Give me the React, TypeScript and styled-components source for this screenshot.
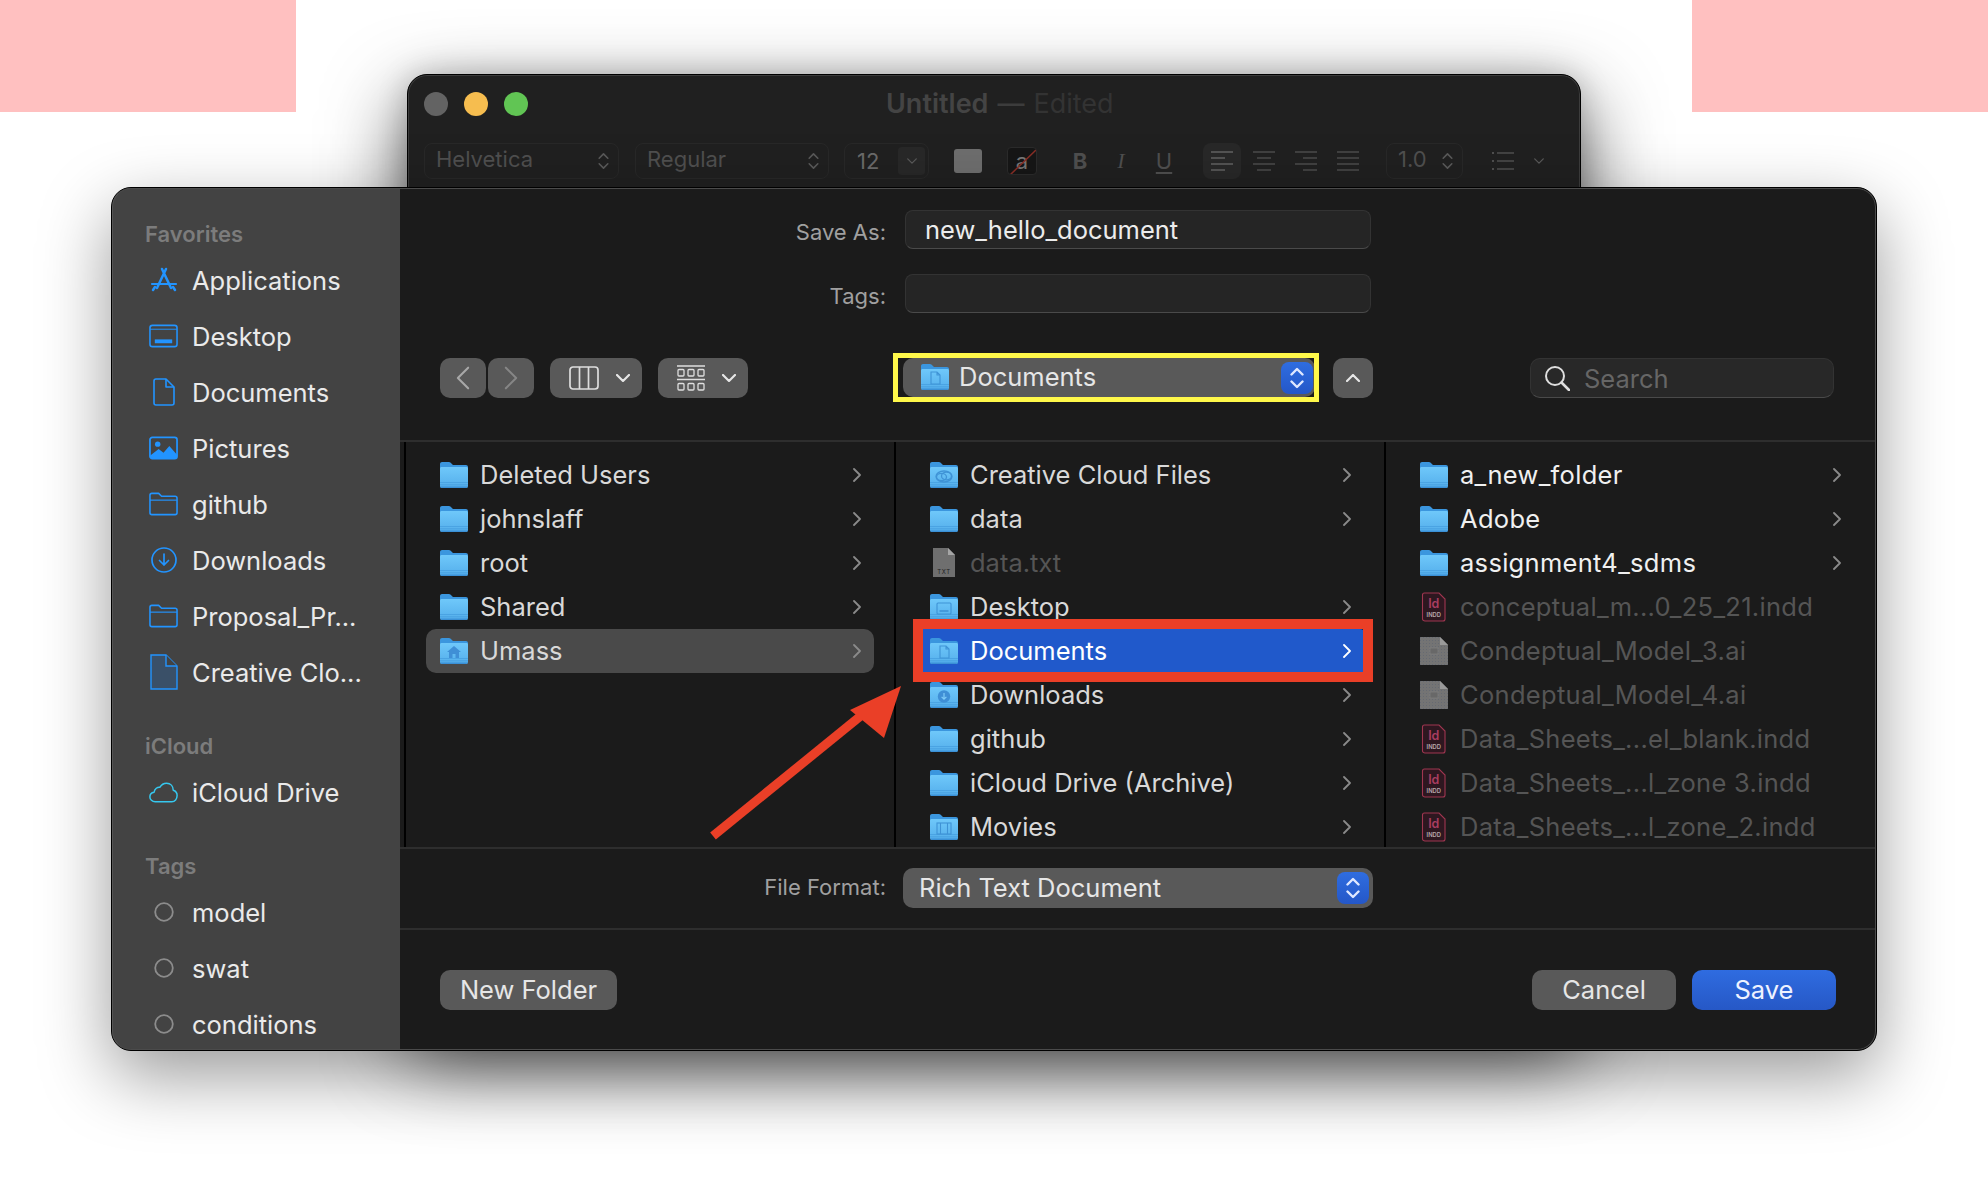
import React from 'react';
import styled, { createGlobalStyle } from 'styled-components';

const Global = createGlobalStyle`
  html, body { margin: 0; padding: 0; background: #fff; }
  * { box-sizing: border-box; }
`;
const FONT = `Inter, "Noto Sans", "Liberation Sans", sans-serif`;

const Page = styled.div`
  position: relative; width: 1988px; height: 1198px; overflow: hidden; background: #fff; font-family: ${FONT};
`;
const PinkRow = styled.div`display: flex; justify-content: space-between;`;
const Pink = styled.div`width: 296px; height: 112px; background: #ffc0c0;`;

/* background window */
const BackWindow = styled.div`
  position: absolute; left: 407px; top: 74px; width: 1174px; height: 950px;
  background: #202020; border: 1px solid #000; border-radius: 20px;
  box-shadow: inset 0 0 0 1px #3c3c3c, 0 30px 80px rgba(0,0,0,.72), 0 0 30px rgba(0,0,0,.18);
`;
const TitleBar = styled.div`display: flex; align-items: center; gap: 16px; height: 58px; padding-left: 16px;`;
const Light = styled.span<{ $c: string }>`width: 24px; height: 24px; border-radius: 50%; background: ${p => p.$c};`;
const Title = styled.div`margin-left: 342px; font-size: 27px; line-height: 32px; color: #333; white-space: nowrap;`;
const TitleStrong = styled.span`font-weight: 600; color: #444;`;
const TitleDash = styled.span`color: #3c3c3c; font-weight: 500; margin: 0 9px;`;
const BackBar = styled.div`display: flex; align-items: center; height: 36px; margin-top: 10px; padding-left: 16px; color: #4f4f4f;`;
const BPill = styled.div<{ $w: number; $ml?: number }>`
  display: flex; align-items: center; justify-content: space-between; flex: none; width: ${p => p.$w}px; height: 36px;
  margin-left: ${p => p.$ml ?? 0}px; padding: 0 9px 5px 11px; border: 1px solid #282828; border-radius: 8px;
  font-size: 22px; color: #4f4f4f;
  & > svg { margin-top: 5px; }
`;
const SizePill = styled(BPill)`padding: 0 3px 0 12px; color: #6a6a6a;`;
const ChevBox = styled.span`display: flex; align-items: center; justify-content: center; width: 27px; height: 28px; border-radius: 4px; background: #282828;`;
const Swatch = styled.div`flex: none; width: 28px; height: 24px; margin-left: 25px; border-radius: 3px; background: #6e6e6e;`;
const NoColor = styled.div`
  position: relative; display: flex; align-items: center; justify-content: center; flex: none; width: 30px; height: 28px; margin-left: 25px;
  border-radius: 4px; background: #161616; border: 1px solid #2b2b2b; color: #777; font-size: 22px; overflow: hidden;
`;
const Slash = styled.svg`position: absolute; inset: 0;`;
const StyleBtn = styled.span<{ $ml: number }>`
  display: inline-block; flex: none; margin-left: ${p => p.$ml}px; width: 20px; text-align: center; font-size: 22px; color: #4f4f4f;
`;
const Bold = styled(StyleBtn)`font-weight: 700;`;
const Ital = styled(StyleBtn)`font-style: italic; font-family: "Liberation Serif", serif; font-weight: 400;`;
const Under = styled(StyleBtn)`text-decoration: underline; text-underline-offset: 3px;`;
const AlignBox = styled.div<{ $on?: boolean; $ml: number }>`
  display: flex; align-items: center; justify-content: center; flex: none; width: 38px; height: 36px; margin-left: ${p => p.$ml}px;
  border-radius: 8px; background: ${p => (p.$on ? '#282828' : 'transparent')};
`;
const ListSlot = styled.span<{ $ml: number }>`display: flex; flex: none; margin-left: ${p => p.$ml}px;`;

/* sheet */
const Sheet = styled.div`
  position: absolute; left: 111px; top: 187px; width: 1766px; height: 864px; display: flex; overflow: hidden;
  border-radius: 20px; border: 1px solid #000; background: #1b1b1b; box-shadow: 0 25px 70px rgba(0,0,0,.4);
  &::after { content: ''; position: absolute; inset: 0; border-radius: 19px; border: 1px solid #4b4b4b; border-left-color: #555; pointer-events: none; }
`;
const Sidebar = styled.aside`width: 288px; flex: none; background: #434343; padding-top: 28px;`;
const SideHead = styled.div<{ $mt?: number }>`
  height: 36px; margin-top: ${p => p.$mt ?? 0}px; padding-left: 33px; line-height: 36px; font-size: 22px; font-weight: 600; color: #7c7c7c;
`;
const SideRow = styled.div`
  display: flex; align-items: center; height: 56px; padding-left: 37px; font-size: 25.5px; color: #eaeaea; white-space: nowrap;
`;
const SideIcon = styled.span`display: flex; align-items: center; justify-content: center; width: 43px; flex: none; padding-right: 14px;`;

const Main = styled.main`flex: 1; min-width: 0; display: flex; flex-direction: column;`;
const Form = styled.div`height: 254px; flex: none; padding-top: 22px; border-bottom: 2px solid #2e2e2e;`;
const FieldRow = styled.div<{ $mb: number }>`display: flex; align-items: center; height: 39px; margin-bottom: ${p => p.$mb}px;`;
const FieldLabel = styled.label`width: 486px; padding-top: 5px; text-align: right; font-size: 22px; color: #a0a0a0;`;
const Field = styled.div`
  width: 466px; height: 39px; margin-left: 19px; padding: 0 19px; line-height: 38px; font-size: 25.5px; color: #ececec;
  background: #252525; border: 1px solid #333; border-bottom-color: #4a4a4a; border-radius: 8px;
`;
const Toolbar = styled.div`display: flex; align-items: flex-start; padding-left: 40px;`;
const Btn = styled.div<{ $w: number; $ml?: number }>`
  display: flex; align-items: center; justify-content: center; flex: none;
  width: ${p => p.$w}px; height: 40px; margin-left: ${p => p.$ml ?? 0}px;
  background: #595959; border-radius: 10px;
`;
const MenuBtn = styled(Btn)`justify-content: flex-start; padding-left: 19px; gap: 17px;`;
const Popup = styled.div`
  position: relative; display: flex; align-items: center; flex: none; width: 412px; height: 39px; margin-left: 155px; padding: 0 0 2px 18px;
  background: #595959; border-radius: 10px; font-size: 25.5px; color: #e6e6e6;
`;
const Stepper = styled.span<{ $r: number }>`
  position: absolute; right: ${p => p.$r}px; top: 4px; display: flex; align-items: center; justify-content: center;
  width: 32px; height: 32px; border-radius: 8px; background: linear-gradient(#2f6de0, #2457c8);
`;
const PopupFolder = styled.span`display: flex; margin-right: 10px;`;
const Search = styled.div`
  display: flex; align-items: center; width: 304px; height: 40px; margin-left: 157px; padding-left: 13px; gap: 14px;
  background: #282828; border: 1px solid #333; border-bottom-color: #4a4a4a; border-radius: 10px;
  font-size: 25.5px; color: #666;
`;

const Columns = styled.div`display: grid; grid-template-columns: repeat(3, 490px); height: 405px; padding-left: 4px; overflow: hidden; flex: none;`;
const Column = styled.div`height: 405px; padding-top: 11px; border-left: 2px solid #000; overflow: hidden;`;
const Row = styled.div<{ $sel?: boolean }>`
  display: flex; align-items: center; height: 44px; margin: 0 20px; padding: 0 13px 0 14px; border-radius: 10px;
  background: ${p => (p.$sel ? '#4a4a4a' : 'transparent')};
`;
const RowName = styled.span<{ $c: string; $ls: number }>`
  flex: 1; margin-left: 12px; padding-bottom: 2px; font-size: 25.5px; letter-spacing: ${p => p.$ls}px; color: ${p => p.$c}; white-space: nowrap;
`;
const BlueRow = styled(Row)`background: #2059cb; border-radius: 4px;`;
const FileSvg = styled.svg`flex: none;`;

const FormatRow = styled.div`
  display: flex; align-items: center; height: 83px; padding-bottom: 1px; flex: none; border-top: 2px solid #2e2e2e; border-bottom: 2px solid #2e2e2e;
`;
const FormatLabel = styled.label`width: 486px; padding-bottom: 2px; text-align: right; font-size: 22px; color: #a0a0a0;`;
const FormatPopup = styled.div`
  position: relative; display: flex; align-items: center; width: 470px; height: 40px; margin-left: 17px; padding: 0 0 2px 16px;
  background: #595959; border-radius: 10px; font-size: 25.5px; color: #e6e6e6;
`;
const Bottom = styled.div`display: flex; flex: 1; padding: 40px 40px 0 40px; justify-content: space-between;`;
const ActionGroup = styled.div`display: flex; gap: 16px;`;
const Action = styled.div<{ $w: number; $primary?: boolean }>`
  display: flex; align-items: center; justify-content: center; width: ${p => p.$w}px; height: 40px; padding-bottom: 2px; border-radius: 10px;
  font-size: 25.5px; color: ${p => (p.$primary ? '#eef2ff' : '#e6e6e6')};
  background: ${p => (p.$primary ? 'linear-gradient(#2f6ce0, #2658c6)' : '#595959')};
`;

/* annotations */
const YellowFrame = styled.div`position: absolute; left: 893px; top: 353px; width: 426px; height: 49px; border: 5px solid #fff84a;`;
const RedFrame = styled.div`position: absolute; left: 913px; top: 619px; width: 460px; height: 63px; border: 10px solid #ea3f27;`;
const Arrow = styled.svg`position: absolute; left: 690px; top: 670px;`;

/* icons */
const Chevron = ({ dir, c = '#8a8a8a', w = 8, h = 14, sw = 1.8 }: { dir: 'l' | 'r' | 'd' | 'u'; c?: string; w?: number; h?: number; sw?: number }) => {
  const d = { r: 'M1 1l6 6-6 6', l: 'M7 1L1 7l6 6', d: 'M1 1l6 6 6-6', u: 'M1 7l6-6 6 6' }[dir];
  const vb = dir === 'l' || dir === 'r' ? '0 0 8 14' : '0 0 14 8';
  return <FileSvg width={w} height={h} viewBox={vb} fill="none" stroke={c} strokeWidth={sw} strokeLinecap="round" strokeLinejoin="round"><path d={d} /></FileSvg>;
};
const UpDown = ({ c = '#dfe8ff', w = 14, h = 24, sw = 2.4 }: { c?: string; w?: number; h?: number; sw?: number }) => (
  <FileSvg width={w} height={h} viewBox="0 0 14 24" fill="none" stroke={c} strokeWidth={sw} strokeLinecap="round" strokeLinejoin="round">
    <path d="M1.5 8.5L7 3l5.5 5.5M1.5 15.5L7 21l5.5-5.5" />
  </FileSvg>
);
type Glyph = 'doc' | 'home' | 'cc' | 'desk' | 'down' | 'film';
const Folder = ({ glyph, w = 28, h = 26 }: { glyph?: Glyph; w?: number; h?: number }) => (
  <FileSvg width={w} height={h} viewBox="0 0 28 26">
    <defs>
      <linearGradient id="fbody" x1="0" y1="0" x2="0" y2="1"><stop offset="0" stopColor="#6fc8fa" /><stop offset="1" stopColor="#54aeeb" /></linearGradient>
    </defs>
    <path d="M0 2C0 .9.9 0 2 0h7c.6 0 1 .2 1.4.6L13 3h13c1.1 0 2 .9 2 2v6H0z" fill="#3b96de" />
    <path d="M0 6.5C0 5.7.7 5 1.5 5h25c.8 0 1.5.7 1.5 1.5V24c0 1.1-.9 2-2 2H2c-1.1 0-2-.9-2-2z" fill="url(#fbody)" />
    <path d="M0 20.5h28M0 22.8h28" stroke="#3f97db" strokeWidth=".7" opacity=".8" />
    <path d="M0 24.4h28V24c0 1.1-.9 2-2 2H2c-1.1 0-2-.9-2-2z" fill="#3a90d6" />
    {glyph === 'doc' && <path d="M10 8h6l3 3v9h-9zM16 8v3h3" fill="none" stroke="#3f93d6" strokeWidth="1.1" />}
    {glyph === 'home' && <path d="M14 8l7 6h-2v6h-3.5v-4h-3v4H9v-6H7z" fill="#3f8fd6" />}
    {glyph === 'cc' && <g fill="none" stroke="#3f93d6" strokeWidth="1.3"><ellipse cx="11.5" cy="15" rx="5" ry="3.6" /><ellipse cx="16.5" cy="14" rx="5" ry="3.8" /><ellipse cx="14" cy="14.5" rx="8" ry="5.5" /></g>}
    {glyph === 'desk' && <g fill="none" stroke="#3f93d6" strokeWidth="1.1"><rect x="7" y="9" width="14" height="11" rx="1" /><path d="M9.5 17h9" strokeWidth="1.6" /></g>}
    {glyph === 'down' && <g><circle cx="14" cy="14.5" r="6.2" fill="#3f8fd6" /><path d="M14 11v6M11.6 14.8L14 17.2l2.4-2.4" fill="none" stroke="#7fcbf7" strokeWidth="1.2" /></g>}
    {glyph === 'film' && <g fill="none" stroke="#3f93d6" strokeWidth="1.1"><rect x="7" y="9" width="14" height="11" /><path d="M10.5 9v11M17.5 9v11" /></g>}
  </FileSvg>
);
const TxtFile = () => (
  <FileSvg width="28" height="30" viewBox="0 0 28 30">
    <path d="M3 0h15l7 7v22H3z" fill="#6f6f6f" />
    <path d="M18 0v7h7z" fill="#a5a5a5" />
    <text x="14" y="26" textAnchor="middle" fontSize="6" fill="#222" fontFamily={FONT} letterSpacing=".6">TXT</text>
  </FileSvg>
);
const AiFile = () => (
  <FileSvg width="28" height="28" viewBox="0 0 28 28">
    <defs><pattern id="dots" width="3" height="3" patternUnits="userSpaceOnUse"><rect width="3" height="3" fill="#747474" /><rect width="1" height="1" fill="#666a72" /></pattern></defs>
    <path d="M0 0h20l8 8v20H0z" fill="url(#dots)" />
    <path d="M20 0v8h8z" fill="#9a9a9a" />
    <rect x="10" y="11" width="8" height="6" fill="#686868" stroke="#808080" strokeWidth=".7" />
  </FileSvg>
);
const IdFile = () => (
  <FileSvg width="28" height="30" viewBox="0 0 28 30">
    <path d="M4.500 1H19l6 6v20c0 1-.8 2-2 2H5c-1.200 0-2.500-1-2.500-2V3c0-1 .8-2 2-2z" fill="#2e1720" stroke="#a03650" strokeWidth="1.100" />
    <text x="13.800" y="16" textAnchor="middle" fontSize="12.500" fontWeight="600" fill="#a83e60" fontFamily={FONT}>Id</text>
    <text x="13.800" y="25" textAnchor="middle" fontSize="5.800" fontWeight="600" fill="#b9a9ae" fontFamily={FONT}>INDD</text>
  </FileSvg>
);

const BLUE = '#2294ff';
const AppsIcon = () => (
  <svg width="28" height="26" viewBox="0 0 28 26" fill="none" stroke={BLUE} strokeLinecap="round" strokeWidth="2.500">
    <path d="M12 2l9 19M16 2L7 21" />
    <path d="M2 17h24" strokeWidth="2.200" />
    <path d="M3 23l2-3M25 23l-2-3" />
  </svg>
);
const DesktopIcon = () => (
  <svg width="30" height="24" viewBox="0 0 30 24" fill="none" stroke={BLUE} strokeWidth="1.600">
    <rect x="1" y="1" width="28" height="22" rx="2.500" /><path d="M1 5h28" strokeWidth="1" />
    <rect x="6" y="15.500" width="18" height="4" fill={BLUE} stroke="none" />
  </svg>
);
const DocIcon = () => (
  <svg width="22" height="28" viewBox="0 0 22 28" fill="none" stroke={BLUE} strokeWidth="1.600" strokeLinejoin="round">
    <path d="M3 1h10l8 8v16c0 1.100-.9 2-2 2H3c-1.100 0-2-.9-2-2V3c0-1.100.9-2 2-2z" /><path d="M13 1v8h8" />
  </svg>
);
const PictureIcon = () => (
  <svg width="30" height="24" viewBox="0 0 30 24">
    <rect x="1" y="1" width="28" height="22" rx="2.500" fill="none" stroke={BLUE} strokeWidth="1.800" />
    <circle cx="9" cy="8" r="2.800" fill={BLUE} />
    <path d="M1 20l9-7 5 4 6-7 8 9v2c0 1-1 2-2 2H3c-1 0-2-1-2-3z" fill={BLUE} />
  </svg>
);
const FolderLine = () => (
  <svg width="30" height="24" viewBox="0 0 30 24" fill="none" stroke={BLUE} strokeWidth="1.600" strokeLinejoin="round">
    <path d="M1 3c0-1.100.9-2 2-2h7l3 3h14c1.100 0 2 .9 2 2v15c0 1.100-.9 2-2 2H3c-1.100 0-2-.9-2-2z" /><path d="M1 8h28" strokeWidth="1.200" />
  </svg>
);
const DownloadIcon = () => (
  <svg width="26" height="26" viewBox="0 0 26 26" fill="none" stroke={BLUE} strokeWidth="1.700" strokeLinecap="round" strokeLinejoin="round">
    <circle cx="13" cy="13" r="12" /><path d="M13 7v11M8.500 13.500L13 18l4.500-4.500" />
  </svg>
);
const CloudDocIcon = () => (
  <svg width="28" height="36" viewBox="0 0 28 36" stroke={BLUE} strokeWidth="1.400">
    <path d="M1 1h15l11 11v23H1z" fill="#3a5068" /><path d="M16 1v11h11" fill="#434343" />
  </svg>
);
const CloudIcon = () => (
  <svg width="33" height="23" viewBox="0 0 33 23" fill="none" stroke="#36c8ef" strokeWidth="1.700" strokeLinejoin="round">
    <path d="M7 22c-3.300 0-6-2.500-6-5.500 0-2.800 2-5 4.800-5.400C6.500 7.300 9.500 5 12.500 5.500 14 2.800 17 1 20 1c4.500 0 7.500 3.400 7.600 8 2.700.8 4.400 3 4.400 6 0 3.800-2.600 7-6 7z" />
  </svg>
);
const TagDot = () => <svg width="20" height="20" viewBox="0 0 20 20" fill="none" stroke="#8c8c8c" strokeWidth="1.800"><circle cx="10" cy="10" r="8.800" /></svg>;
const ColumnsIcon = () => (
  <FileSvg width="30" height="24" viewBox="0 0 30 24" fill="none" stroke="#dedede" strokeWidth="1.700"><rect x="1" y="1" width="28" height="22" rx="3" /><path d="M10.500 1v22M19.500 1v22" /></FileSvg>
);
const GridIcon = () => (
  <FileSvg width="28" height="26" viewBox="0 0 28 26" fill="none" stroke="#dedede" strokeWidth="1.300">
    <path d="M0 1h28M0 14.500h28" strokeWidth="1.600" />
    {[4.500, 18.500].map(y => [1, 11, 21].map(x => <rect key={`${x}-${y}`} x={x} y={y} width="6" height="6.500" rx="1" />))}
  </FileSvg>
);
const SearchIcon = () => (
  <FileSvg width="26" height="26" viewBox="0 0 26 26" fill="none" stroke="#dedede" strokeWidth="2" strokeLinecap="round"><circle cx="11" cy="11" r="9" /><path d="M17.500 17.500L25 25" strokeWidth="2.600" /></FileSvg>
);
const AlignIcon = ({ kind, c = '#4f4f4f' }: { kind: 'l' | 'c' | 'r' | 'j'; c?: string }) => {
  const rows = { l: [[0, 22], [0, 14], [0, 22], [0, 14]], c: [[0, 22], [4, 14], [0, 22], [4, 14]], r: [[0, 22], [8, 14], [0, 22], [8, 14]], j: [[0, 22], [0, 22], [0, 22], [0, 22]] }[kind];
  return (
    <FileSvg width="22" height="22" viewBox="0 0 22 22" stroke={c} strokeWidth="1.400">
      {rows.map((r, i) => <path key={i} d={`M${r[0]} ${2 + i * 6}h${r[1]}`} />)}
    </FileSvg>
  );
};
const ListIcon = () => (
  <FileSvg width="22" height="22" viewBox="0 0 22 22" stroke="#4f4f4f" strokeWidth="1.400">
    <path d="M5 3h17M5 11h17M5 19h17" /><path d="M0 3h2M0 11h2M0 19h2" strokeWidth="2" />
  </FileSvg>
);

type Item = { name: string; icon: React.ReactNode; dim?: boolean; sel?: boolean; blue?: boolean };
const f = (name: string, glyph?: Glyph, extra: Partial<Item> = {}): Item => ({ name, icon: <Folder glyph={glyph} />, ...extra });
const col1: Item[] = [f('Deleted Users'), f('johnslaff'), f('root'), f('Shared'), f('Umass', 'home', { sel: true })];
const col2: Item[] = [
  f('Creative Cloud Files', 'cc'), f('data'), { name: 'data.txt', icon: <TxtFile />, dim: true }, f('Desktop', 'desk'),
  f('Documents', 'doc', { blue: true }), f('Downloads', 'down'), f('github'), f('iCloud Drive (Archive)'), f('Movies', 'film'),
];
const col3: Item[] = [
  f('a_new_folder'), f('Adobe'), f('assignment4_sdms'),
  { name: 'conceptual_m...0_25_21.indd', icon: <IdFile />, dim: true },
  { name: 'Condeptual_Model_3.ai', icon: <AiFile />, dim: true },
  { name: 'Condeptual_Model_4.ai', icon: <AiFile />, dim: true },
  { name: 'Data_Sheets_...el_blank.indd', icon: <IdFile />, dim: true },
  { name: 'Data_Sheets_...l_zone 3.indd', icon: <IdFile />, dim: true },
  { name: 'Data_Sheets_...l_zone_2.indd', icon: <IdFile />, dim: true },
];
const FileColumn = ({ items, text, ls = 0 }: { items: Item[]; text: string; ls?: number }) => (
  <Column>
    {items.map(it => {
      const R = it.blue ? BlueRow : Row;
      return (
        <R key={it.name} $sel={it.sel}>
          {it.icon}
          <RowName $ls={ls} $c={it.blue ? '#fff' : it.dim ? '#555' : text}>{it.name}</RowName>
          {!it.dim && <Chevron dir="r" c={it.blue ? '#fff' : '#8a8a8a'} />}
        </R>
      );
    })}
  </Column>
);
const sideFav: [string, React.ReactNode][] = [
  ['Applications', <AppsIcon />], ['Desktop', <DesktopIcon />], ['Documents', <DocIcon />], ['Pictures', <PictureIcon />],
  ['github', <FolderLine />], ['Downloads', <DownloadIcon />], ['Proposal_Pr...', <FolderLine />], ['Creative Clo...', <CloudDocIcon />],
];

export default function App() {
  return (
    <Page>
      <Global />
      <PinkRow><Pink /><Pink /></PinkRow>
      <BackWindow>
        <TitleBar>
          <Light $c="#636363" /><Light $c="#f6bd4f" /><Light $c="#61c554" />
          <Title><TitleStrong>Untitled</TitleStrong><TitleDash>—</TitleDash>Edited</Title>
        </TitleBar>
        <BackBar>
          <BPill $w={195}>Helvetica<UpDown c="#5a5a5a" w={11} h={20} sw={2} /></BPill>
          <BPill $w={194} $ml={16}>Regular<UpDown c="#5a5a5a" w={11} h={20} sw={2} /></BPill>
          <SizePill $w={85} $ml={15}>12<ChevBox><Chevron dir="d" c="#5a5a5a" w={10} h={6} /></ChevBox></SizePill>
          <Swatch />
          <NoColor>a<Slash width="30" height="28"><path d="M2 27L28 2" stroke="#8a2e26" strokeWidth="1.500" /></Slash></NoColor>
          <Bold $ml={33}>B</Bold>
          <Ital $ml={21}>I</Ital>
          <Under $ml={23}>U</Under>
          <AlignBox $on $ml={29}><AlignIcon kind="l" c="#666" /></AlignBox>
          <AlignBox $ml={4}><AlignIcon kind="c" /></AlignBox>
          <AlignBox $ml={4}><AlignIcon kind="r" /></AlignBox>
          <AlignBox $ml={4}><AlignIcon kind="j" /></AlignBox>
          <BPill $w={77} $ml={19}>1.0<UpDown c="#5a5a5a" w={11} h={20} sw={2} /></BPill>
          <ListSlot $ml={29}><ListIcon /></ListSlot>
          <ListSlot $ml={20}><Chevron dir="d" c="#5a5a5a" w={10} h={6} /></ListSlot>
        </BackBar>
      </BackWindow>

      <Sheet>
        <Sidebar>
          <SideHead>Favorites</SideHead>
          {sideFav.map(([n, ic]) => <SideRow key={n}><SideIcon>{ic}</SideIcon>{n}</SideRow>)}
          <SideHead $mt={28}>iCloud</SideHead>
          <SideRow><SideIcon><CloudIcon /></SideIcon>iCloud Drive</SideRow>
          <SideHead $mt={28}>Tags</SideHead>
          {['model', 'swat', 'conditions'].map(t => <SideRow key={t}><SideIcon><TagDot /></SideIcon>{t}</SideRow>)}
        </Sidebar>
        <Main>
          <Form>
            <FieldRow $mb={25}><FieldLabel>Save As:</FieldLabel><Field>new_hello_document</Field></FieldRow>
            <FieldRow $mb={45}><FieldLabel>Tags:</FieldLabel><Field /></FieldRow>
            <Toolbar>
              <Btn $w={46}><Chevron dir="l" c="#a8a8a8" w={14} h={24} sw={1.200} /></Btn>
              <Btn $w={46} $ml={2}><Chevron dir="r" c="#868686" w={14} h={24} sw={1.200} /></Btn>
              <MenuBtn $w={92} $ml={16}><ColumnsIcon /><Chevron dir="d" c="#e6e6e6" w={14} h={8} sw={2.200} /></MenuBtn>
              <MenuBtn $w={90} $ml={16}><GridIcon /><Chevron dir="d" c="#e6e6e6" w={14} h={8} sw={2.200} /></MenuBtn>
              <Popup><PopupFolder><Folder glyph="doc" /></PopupFolder>Documents<Stepper $r={2}><UpDown /></Stepper></Popup>
              <Btn $w={40} $ml={18}><Chevron dir="u" c="#e6e6e6" w={14} h={8} sw={2.200} /></Btn>
              <Search><SearchIcon />Search</Search>
            </Toolbar>
          </Form>
          <Columns>
            <FileColumn items={col1} text="#d9d9d9" />
            <FileColumn items={col2} text="#d9d9d9" />
            <FileColumn items={col3} text="#f0f0f0" ls={0.3} />
          </Columns>
          <FormatRow>
            <FormatLabel>File Format:</FormatLabel>
            <FormatPopup>Rich Text Document<Stepper $r={4}><UpDown /></Stepper></FormatPopup>
          </FormatRow>
          <Bottom>
            <Action $w={177}>New Folder</Action>
            <ActionGroup>
              <Action $w={144}>Cancel</Action>
              <Action $w={144} $primary>Save</Action>
            </ActionGroup>
          </Bottom>
        </Main>
      </Sheet>

      <YellowFrame />
      <RedFrame />
      <Arrow width="230" height="180" viewBox="0 0 230 180">
        <path d="M23 166L178 40" stroke="#ea3f27" strokeWidth="9" />
        <path d="M211 16L160 40L194 68z" fill="#ea3f27" />
      </Arrow>
    </Page>
  );
}
